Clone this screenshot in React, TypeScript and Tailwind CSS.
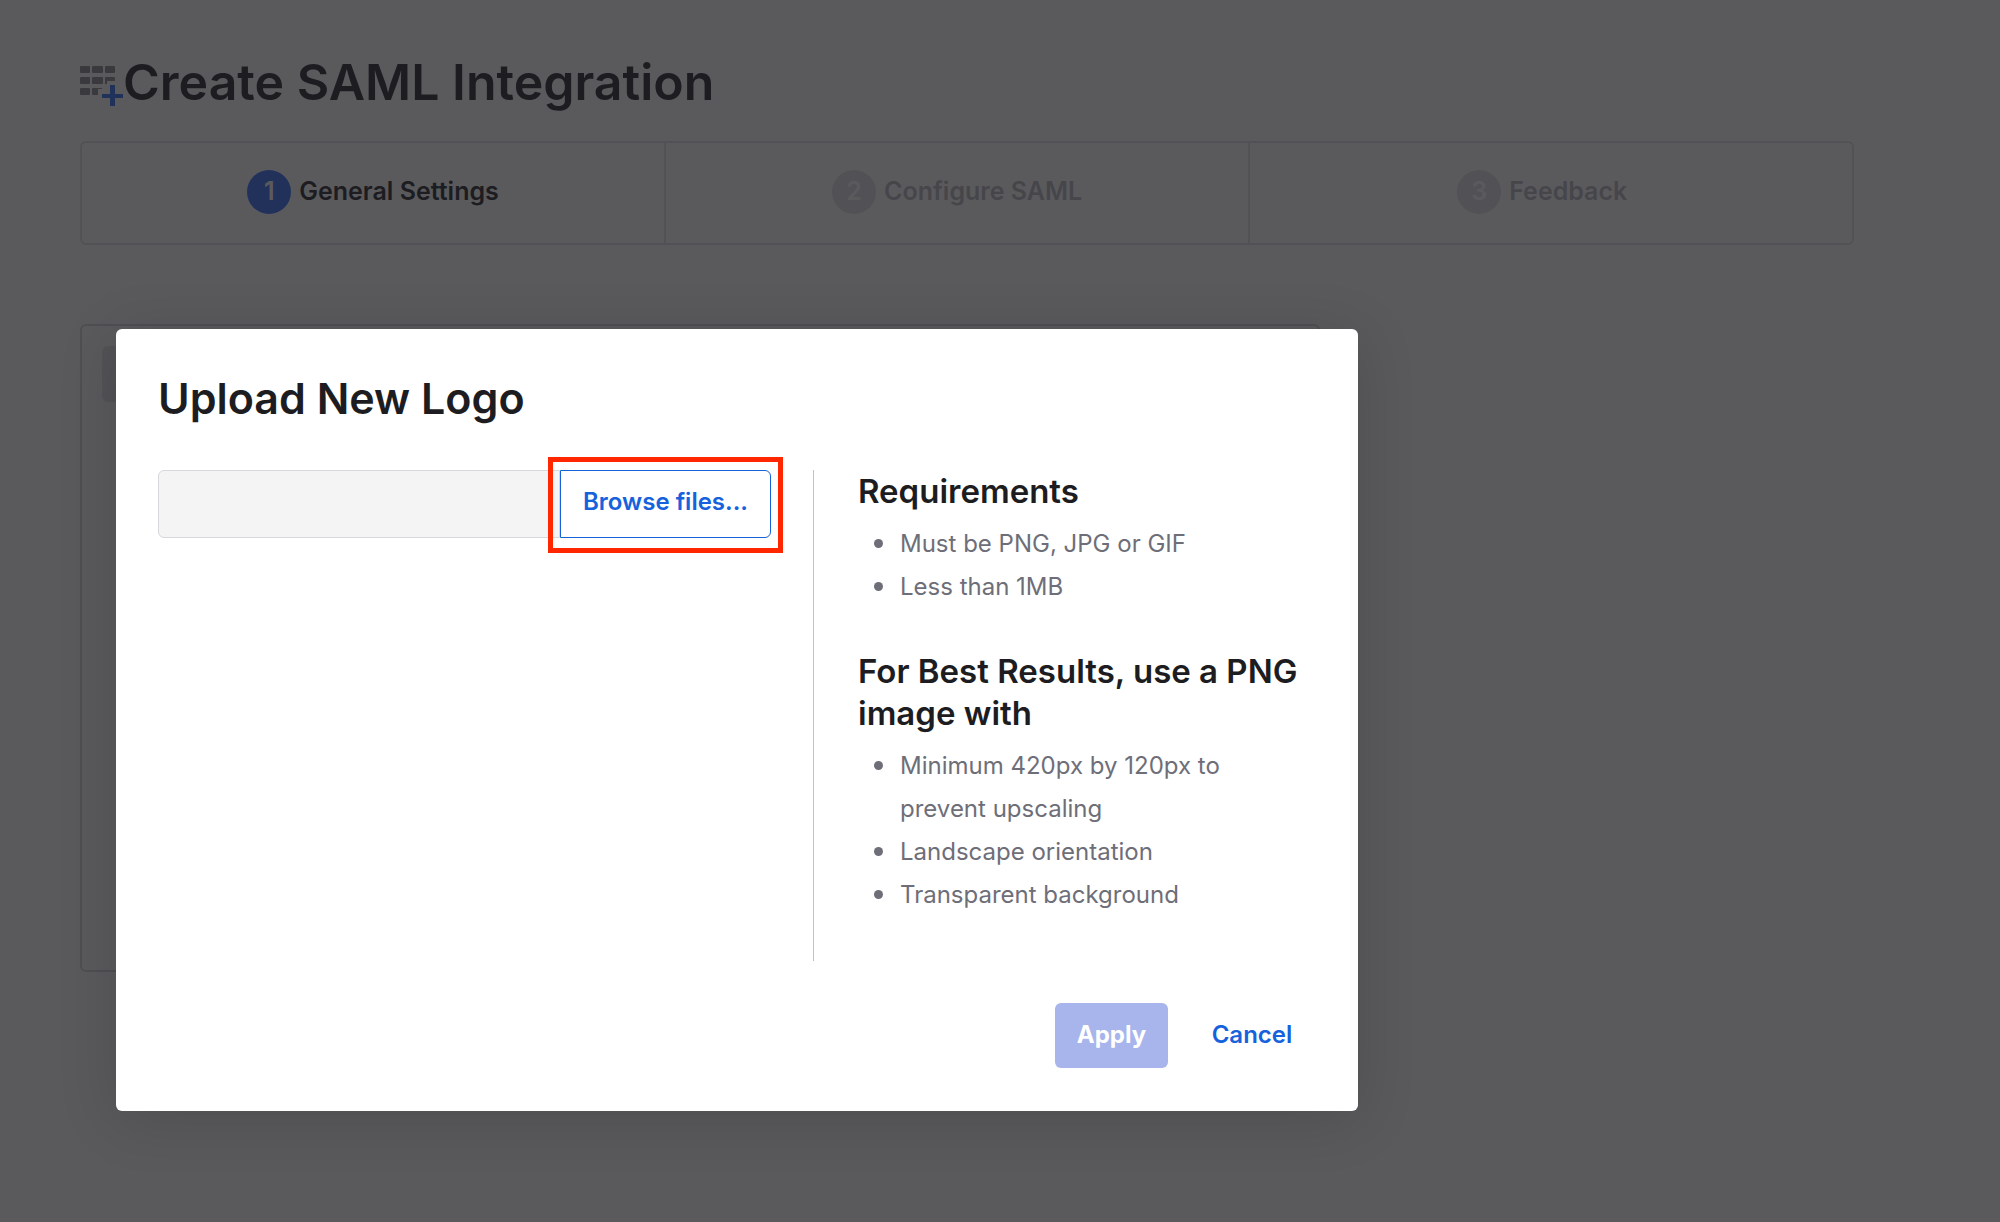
import clsx from "clsx";

const steps = [
  { number: 1, label: "General Settings", active: true },
  { number: 2, label: "Configure SAML", active: false },
  { number: 3, label: "Feedback", active: false },
];

const sections = [
  {
    title: "Requirements",
    items: ["Must be PNG, JPG or GIF", "Less than 1MB"],
  },
  {
    title: "For Best Results, use a PNG image with",
    items: [
      "Minimum 420px by 120px to prevent upscaling",
      "Landscape orientation",
      "Transparent background",
    ],
  },
];

function AppGridIcon() {
  return (
    <svg width="43" height="40" viewBox="0 0 43 40" className="mt-2 shrink-0" aria-hidden="true">
      <g fill="#85848d">
        <rect x="0" y="0" width="10" height="7" rx="1" />
        <rect x="12" y="0" width="11" height="7" rx="1" />
        <rect x="25" y="0" width="10" height="7" rx="1" />
        <rect x="0" y="11" width="10" height="7" rx="1" />
        <rect x="12" y="11" width="11" height="7" rx="1" />
        <path d="M26 11h8a1 1 0 0 1 1 1v3h-8v3h-2v-6a1 1 0 0 1 1-1z" />
        <rect x="0" y="22" width="10" height="7" rx="1" />
        <path d="M13 22h9v1h-4v6h-5a1 1 0 0 1-1-1v-5a1 1 0 0 1 1-1z" />
      </g>
      <path d="M30 19h5v9h8v4h-8v8h-5v-8h-8v-4h8z" fill="#2a6cf5" />
    </svg>
  );
}

function Stepper() {
  return (
    <ol className="mt-[29px] flex h-[104px] rounded-md border-2 border-[#e2e2e5]">
      {steps.map((step, i) => (
        <li
          key={step.number}
          className={clsx(
            "flex w-[33%] items-center justify-center gap-2 pb-[3px]",
            i < steps.length - 1 && "border-r-2 border-[#e2e2e5]"
          )}
        >
          <span
            className={clsx(
              "flex size-11 items-center justify-center rounded-full text-[25px] font-semibold text-white",
              step.active ? "bg-[#2c6af5]" : "bg-[#dedde3]"
            )}
          >
            {step.number}
          </span>
          <span
            className={clsx("text-[25px] font-semibold", step.active ? "text-[#1d1d21]" : "text-[#b4b4ba]")}
          >
            {step.label}
          </span>
        </li>
      ))}
    </ol>
  );
}

function UploadDialog() {
  return (
    <div
      role="dialog"
      aria-modal="true"
      aria-labelledby="upload-title"
      className="absolute left-[116px] top-[329px] w-[1242px] rounded-md bg-white px-[42px] pt-[43px] pb-[43px] shadow-[0_8px_60px_rgba(0,0,0,0.14)]"
    >
      <h2 id="upload-title" className="text-[43px] leading-[52px] font-semibold text-[#1d1d21]">
        Upload New Logo
      </h2>

      <div className="mt-[46px] flex">
        <div className="relative flex w-[613px] shrink-0 self-start">
          <input
            type="text"
            readOnly
            aria-label="Logo file"
            className="h-[68px] min-w-0 flex-1 rounded-l-md border border-[#d7d7dc] bg-[#f4f4f5] px-4 text-2xl outline-none"
          />
          <button
            type="button"
            className="h-[68px] w-[211px] rounded-r-md border border-[#1662dd] bg-white pb-1 text-2xl font-semibold text-[#1662dd]"
          >
            Browse files...
          </button>
          <span className="pointer-events-none absolute -top-[13px] -right-3 h-24 w-[235px] border-5 border-[#ff2600]" />
        </div>

        <div className="ml-[42px] flex h-[491px] flex-1 flex-col gap-[42px] border-l border-[#c1c1c8] pl-11">
          {sections.map((section) => (
            <section key={section.title}>
              <h3 className="text-[33px] leading-[42px] font-semibold text-[#1d1d21]">{section.title}</h3>
              <ul className="mt-[10px] pr-5 pl-[42px] text-2xl leading-[43px] text-[#6e6e78]">
                {section.items.map((item) => (
                  <li
                    key={item}
                    className="relative before:absolute before:top-[17px] before:-left-[26px] before:size-[9px] before:rounded-full before:bg-[#6e6e78]"
                  >
                    {item}
                  </li>
                ))}
              </ul>
            </section>
          ))}
        </div>
      </div>

      <div className="mt-[42px] flex justify-end">
        <button
          type="button"
          disabled
          className="h-[65px] w-[113px] rounded-md bg-[#a7b5ec] pb-[2px] text-2xl font-bold text-white"
        >
          Apply
        </button>
        <button
          type="button"
          className="ml-5 h-[65px] w-[128px] pb-[2px] text-2xl font-semibold text-[#1662dd]"
        >
          Cancel
        </button>
      </div>
    </div>
  );
}

export default function App() {
  return (
    <div className="relative min-h-screen overflow-hidden bg-white font-['Inter',sans-serif]">
      <main className="pt-[52px] pr-[146px] pl-20">
        <h1 className="flex items-center text-[50px] leading-[60px] font-semibold text-[#1d1d21]">
          <AppGridIcon />
          Create SAML Integration
        </h1>
        <Stepper />
        <div className="mt-[79px] h-[648px] w-[1240px] rounded-md border-2 border-[#d7d7da] p-5">
          <div className="h-14 rounded-md bg-[#e4e4e8]" />
        </div>
      </main>

      <div className="absolute inset-0 bg-[#1d1d21]/73" />
      <UploadDialog />
    </div>
  );
}
